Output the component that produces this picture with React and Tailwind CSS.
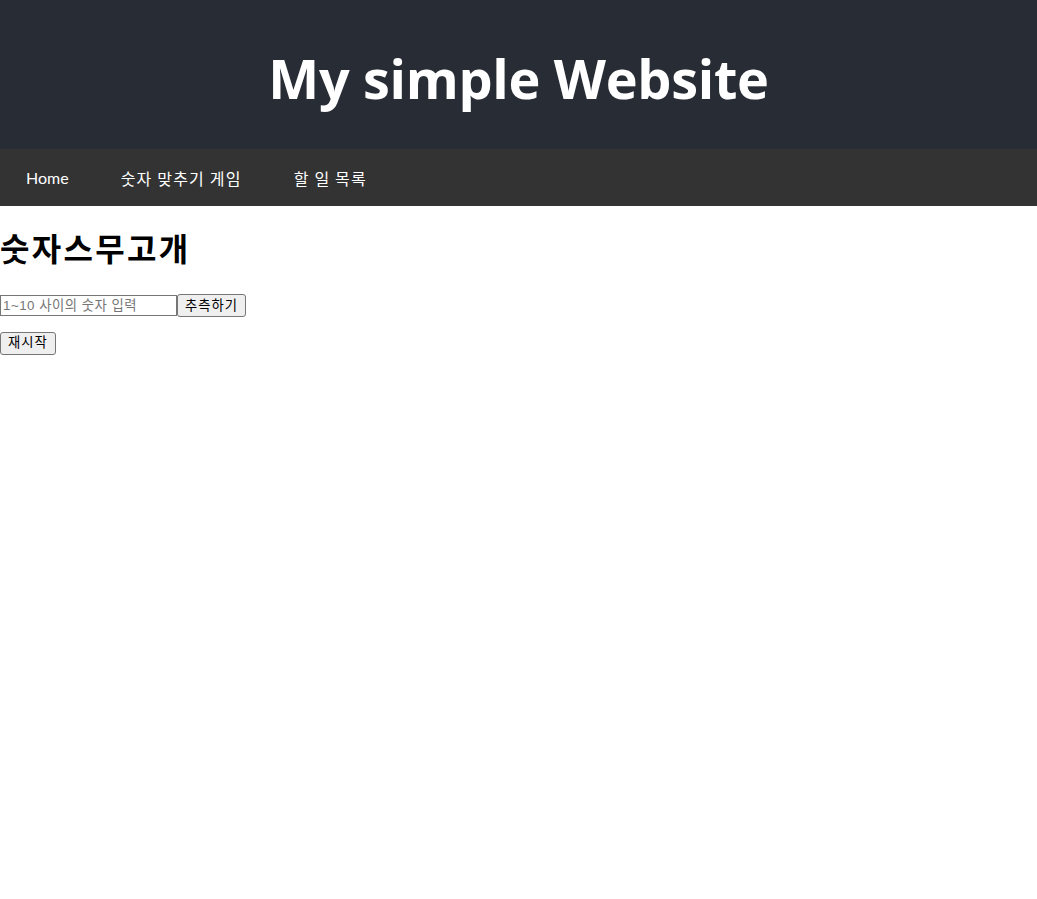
import { useState } from 'react';

export default function App() {
  const [guess, setGuess] = useState('');

  return (
    <div className="min-h-screen bg-white">
      {/* Header */}
      <header className="bg-[#282c34] h-[149px] flex items-center justify-center">
        <h1 className="text-white text-[54px] font-bold leading-none tracking-[-0.3px] font-['Open_Sans','Noto_Sans',sans-serif] pt-[6px]">
          My simple Website
        </h1>
      </header>

      {/* Nav */}
      <nav className="bg-[#333333] h-[57px] flex items-center font-['Lato','Noto_Sans_CJK_KR',sans-serif] text-[16px] text-white">
        <a className="px-[26px]">Home</a>
        <a className="px-[26px] tracking-[1.2px] font-['Noto_Sans_CJK_KR',sans-serif]">숫자 맞추기 게임</a>
        <a className="px-[26px] tracking-[1.2px] font-['Noto_Sans_CJK_KR',sans-serif]">할 일 목록</a>
      </nav>

      {/* Game */}
      <main className="font-['Liberation_Sans','Noto_Sans_CJK_KR',sans-serif] text-black">
        <h2 className="text-[32px] font-bold leading-[37px] tracking-[2.3px] mt-[26px] mb-[25px]">숫자스무고개</h2>
        <div className="flex items-center">
          <input
            value={guess}
            onChange={(e) => setGuess(e.target.value)}
            placeholder="1~10 사이의 숫자 입력"
            className="w-[177px] h-[21px] border border-[#767676] px-[2px] text-[13.33px] tracking-[0.5px] placeholder:text-[#757575] outline-none"
          />
          <button className="h-[23px] px-[7px] tracking-[1px] border border-[#767676] rounded-[3px] bg-[#efefef] text-[13.33px] font-normal">
            추측하기
          </button>
        </div>
        <div className="mt-[13px]">
          <button className="h-[23px] px-[7px] tracking-[1px] border border-[#767676] rounded-[3px] bg-[#efefef] text-[13.33px] font-normal">
            재시작
          </button>
        </div>
      </main>
    </div>
  );
}
